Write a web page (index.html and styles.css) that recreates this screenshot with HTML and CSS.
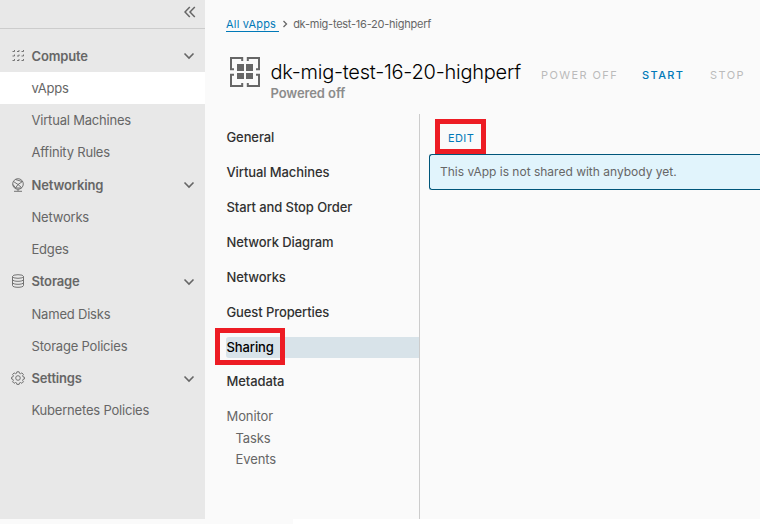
FILE: index.html
```
<!DOCTYPE html>
<html lang="en">
<head>
<meta charset="utf-8">
<title>dk-mig-test-16-20-highperf</title>
<link rel="stylesheet" href="styles.css">
</head>
<body>
<div class="app">
  <nav class="sidebar">
    <div class="collapse">
      <svg width="12" height="12" viewBox="0 0 12 12"><path d="M5.800 1 1 6l4.800 5M10.800 1 6 6l4.800 5"/></svg>
    </div>
    <div class="groups">
      <div class="row head">
        <svg class="icon dots" width="14" height="14" viewBox="0 0 14 14"><path d="M1.500 2.500h2V1M6 2.500h2V1M10.500 2.500h2V1M1.500 7h2V5.500M6 7h2V5.500M10.500 7h2V5.500M1.500 11.500h2V10M6 11.500h2V10M10.500 11.500h2V10"/></svg>
        <span>Compute</span>
        <svg class="chev" width="12" height="8" viewBox="0 0 12 8"><path d="m1.500 1.500 4.500 4.500 4.500-4.500"/></svg>
      </div>
      <a class="row active"><span>vApps</span></a>
      <a class="row"><span>Virtual Machines</span></a>
      <a class="row"><span>Affinity Rules</span></a>
      <div class="row head">
        <svg class="icon" width="14" height="14" viewBox="0 0 14 14"><circle cx="7" cy="6" r="5.300"/><path d="M2.500 3.500 7 6.500l4.500-3M7 6.500 4.500 10M7 6.500l3.500 3M2 6.500l2.500 3.500h6M4.500 1.500l6.500 2M3 13.300h8M7 11.500v1.500"/></svg>
        <span>Networking</span>
        <svg class="chev" width="12" height="8" viewBox="0 0 12 8"><path d="m1.500 1.500 4.500 4.500 4.500-4.500"/></svg>
      </div>
      <a class="row"><span>Networks</span></a>
      <a class="row"><span>Edges</span></a>
      <div class="row head">
        <svg class="icon" width="14" height="14" viewBox="0 0 14 14"><ellipse cx="7" cy="2.500" rx="5.500" ry="1.800"/><path d="M1.500 2.500v9c0 2.400 11 2.400 11 0v-9M1.500 5.500c0 2.400 11 2.400 11 0M1.500 8.500c0 2.400 11 2.400 11 0"/></svg>
        <span>Storage</span>
        <svg class="chev" width="12" height="8" viewBox="0 0 12 8"><path d="m1.500 1.500 4.500 4.500 4.500-4.500"/></svg>
      </div>
      <a class="row"><span>Named Disks</span></a>
      <a class="row"><span>Storage Policies</span></a>
      <div class="row head">
        <svg class="icon" width="14" height="14" viewBox="0 0 14 14"><circle cx="7" cy="7" r="2.300"/><path d="M5.900.8h2.200l.4 1.500 1 .4 1.400-.8 1.500 1.500-.8 1.400.4 1 1.400.4v1.800l-1.400.4-.4 1 .8 1.400-1.500 1.500-1.400-.8-1 .4-.4 1.500H5.900l-.4-1.500-1-.4-1.400.8-1.500-1.500.8-1.400-.4-1L.6 8V6.200L2 5.800l.4-1-.8-1.400 1.500-1.500 1.400.8 1-.4z"/></svg>
        <span>Settings</span>
        <svg class="chev" width="12" height="8" viewBox="0 0 12 8"><path d="m1.500 1.500 4.500 4.500 4.500-4.500"/></svg>
      </div>
      <a class="row"><span>Kubernetes Policies</span></a>
    </div>
  </nav>
  <main class="main">
    <div class="crumbs">
      <a class="crumb-link">All vApps</a>
      <svg width="6" height="8" viewBox="0 0 6 8"><path d="m1.500 1 3 3-3 3"/></svg>
      <span class="crumb-here">dk-mig-test-16-20-highperf</span>
    </div>
    <header class="title-bar">
      <svg class="vapp" width="30" height="30" viewBox="0 0 30 30"><path class="frame" d="M12.200 4V1H1v11.200h3M17.800 4V1H29v11.200h-3M12.200 26v3H1V17.800h3M17.800 26v3H29V17.800h-3"/><path class="tiles" d="M7 7h7v7H7zM16 7h7v7h-7zM7 16h7v6H7zM16 16h7v6h-7z"/></svg>
      <div class="heading">
        <h1>dk-mig-test-16-20-highperf</h1>
        <div class="state">Powered off</div>
      </div>
      <div class="actions">
        <span class="off">POWER OFF</span>
        <span class="start">START</span>
        <span class="stop">STOP</span>
      </div>
    </header>
    <div class="body">
      <nav class="menu">
        <a>General</a>
        <a>Virtual Machines</a>
        <a>Start and Stop Order</a>
        <a>Network Diagram</a>
        <a>Networks</a>
        <a>Guest Properties</a>
        <a class="selected">Sharing<i class="mark"></i></a>
        <a>Metadata</a>
        <div class="monitor">
          <div>Monitor</div>
          <div class="sub">Tasks</div>
          <div class="sub">Events</div>
        </div>
      </nav>
      <section class="content">
        <div class="edit">EDIT</div>
        <div class="alert">This vApp is not shared with anybody yet.</div>
      </section>
    </div>
  </main>
</div>
<div class="strip"></div>
</body>
</html>
```
FILE: styles.css
```
* { box-sizing: border-box; }
body {
  margin: 0;
  width: 760px;
  height: 524px;
  overflow: hidden;
  background: #fafafa;
  font-family: Inter, "Open Sans", sans-serif;
  font-size: 13px;
  color: #666;
}
svg { fill: none; stroke: #666; flex: none; display: block; }
.app { display: flex; height: 519px; }
.strip { height: 5px; margin-left: 293px; background: #fff; }

.sidebar { width: 205px; background: #e8e8e8; flex: none; }
.collapse {
  height: 29px;
  border-bottom: 1px solid #ccc;
  display: flex;
  justify-content: flex-end;
  padding: 6px 9.5px 0 0;
}
.collapse svg { stroke-width: 1.5; }
.groups { padding-top: 11px; }
.row {
  display: flex;
  align-items: center;
  height: 32.22px;
  padding: 0 0 0.6px 31.5px;
  letter-spacing: -0.2px;
}
.head { padding-left: 11px; font-weight: 600; letter-spacing: -0.15px; }
.head span { margin-left: 6.5px; flex: 1; }
.icon { stroke-width: 0.9; }
.chev { margin: 1px 10px 0 0; stroke-width: 1.6; }
.active { background: #fff; }

.main { flex: 1; min-width: 0; display: flex; flex-direction: column; }
.crumbs {
  display: flex;
  align-items: center;
  height: 16px;
  margin: 16px 0 0 21px;
  font-size: 11px;
}
.crumb-link { color: #0079b8; border-bottom: 1px solid #0079b8; line-height: 14px; padding-right: 3px; letter-spacing: 0.2px; }
.crumb-here { letter-spacing: -0.24px; }
.crumbs svg { margin: 0 5px 0 3px; stroke-width: 1.3; }
.title-bar { display: flex; height: 82px; padding: 25px 0 0 25px; }
.vapp .frame { stroke-width: 2; }
.vapp .tiles { fill: #666; stroke: none; }
.heading { width: 251px; margin-left: 10.5px; white-space: nowrap; }
h1 { margin: 1px 0 0; font-size: 20px; line-height: 28px; font-weight: 300; letter-spacing: -0.24px; color: #000; }
.state { font-weight: 600; color: #8c8c8c; line-height: 15px; letter-spacing: -0.1px; }
.actions { display: flex; margin: 12px 0 0 19.5px; font-size: 11px; line-height: 13px; letter-spacing: 1.4px; color: #bbb; white-space: nowrap; }
.off { width: 101px; }
.start { width: 68px; color: #0079b8; font-weight: 500; }

.body { display: flex; flex: 1; }
.menu { width: 215px; border-right: 1px solid #ccc; padding: 13px 0 0 21px; font-weight: 500; letter-spacing: -0.1px; color: #313131; }
.menu a { display: block; height: 21px; line-height: 21px; margin-bottom: 14px; padding-left: 0.5px; }
.menu .selected { position: relative; background: #d8e3e9; border-radius: 3px 0 0 3px; color: #000; margin-bottom: 13px; }
.mark { position: absolute; left: -11px; top: -9px; width: 70px; height: 37px; border: 5px solid #ed1c24; }
.monitor { font-weight: 400; color: #666; line-height: 21.5px; padding-left: 0.5px; }
.sub { padding-left: 9px; }
.content { flex: 1; padding: 5px 0 0 9px; }
.edit {
  width: 51px;
  height: 35px;
  margin-left: 6px;
  border: 5px solid #ed1c24;
  padding-left: 8px;
  font-size: 11px;
  line-height: 29px;
  letter-spacing: 0.4px;
  color: #0079b8;
}
.alert {
  height: 36px;
  border: 1px solid #00567a;
  border-right: 0;
  border-radius: 3px 0 0 3px;
  background: #e1f4fc;
  padding-left: 10px;
  font-size: 12px;
  line-height: 34px;
}
```
